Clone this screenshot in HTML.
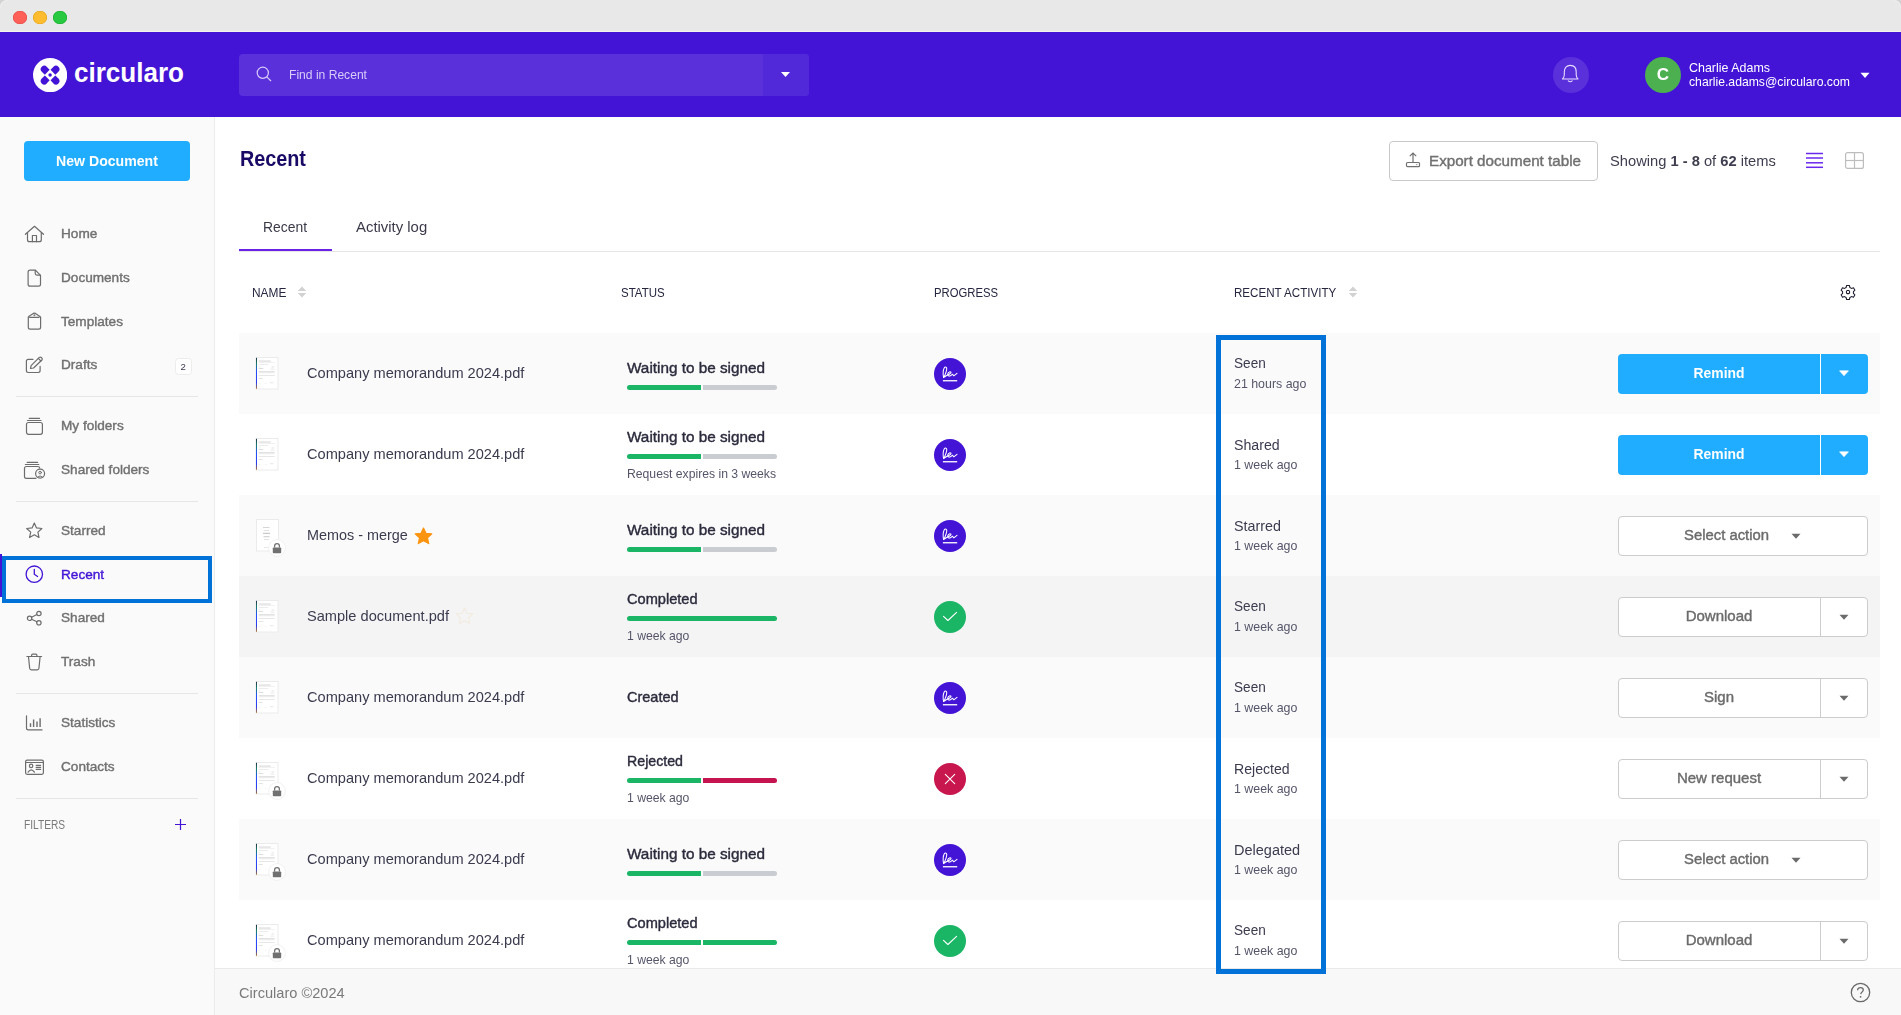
<!DOCTYPE html>
<html><head><meta charset="utf-8"><title>Circularo - Recent</title>
<style>
html,body{margin:0;padding:0;width:1901px;height:1015px;overflow:hidden;background:#fff;font-family:"Liberation Sans", sans-serif;}
.a{position:absolute;}
.t{position:absolute;white-space:nowrap;line-height:0;will-change:transform;}
.t b{font-weight:700;}
.sb{-webkit-text-stroke:0.4px currentColor;}
</style></head><body>
<div class="a" style="left:0px;top:0px;width:1901px;height:31px;background:#e8e8e8"></div>
<div class="a" style="left:0px;top:31px;width:1901px;height:1px;background:#f3f3ee"></div>
<svg class="a" style="left:0;top:0" width="12" height="12" viewBox="0 0 12 12"><path d="M0 0 H7.5 Q0 0 0 7.5 Z" fill="#d2d2d2"/><path d="M0.6 7.5 Q0.6 0.6 7.5 0.6" fill="none" stroke="#efefef" stroke-width="1"/></svg>
<svg class="a" style="left:1889px;top:0" width="12" height="12" viewBox="0 0 12 12"><path d="M12 0 H4.5 Q12 0 12 7.5 Z" fill="#d2d2d2"/><path d="M11.4 7.5 Q11.4 0.6 4.5 0.6" fill="none" stroke="#efefef" stroke-width="1"/></svg>
<div class="a" style="left:13.4px;top:10.6px;width:13.2px;height:13.2px;background:#fe5f57;border-radius:50%;box-shadow:inset 0 0 0 0.6px #e2463f"></div>
<div class="a" style="left:33.4px;top:10.6px;width:13.2px;height:13.2px;background:#febc2e;border-radius:50%;box-shadow:inset 0 0 0 0.6px #e1a116"></div>
<div class="a" style="left:53.4px;top:10.6px;width:13.2px;height:13.2px;background:#28c840;border-radius:50%;box-shadow:inset 0 0 0 0.6px #12ac28"></div>
<div class="a" style="left:0px;top:32px;width:1901px;height:85px;background:#4314d6"></div>
<svg class="a" style="left:32.8px;top:57.6px" width="34.2" height="34.2" viewBox="0 0 34.2 34.2">
<circle cx="17.1" cy="17.1" r="17.1" fill="#fff"/>
<g fill="#4314d6" transform="translate(0.1 0.1)">
<path id="lobe" d="M16.55 11.75 L13.62 8.68 A3.49 3.49 0 0 0 8.68 13.62 L11.75 16.55 Z"/>
<path d="M16.55 11.75 L13.62 8.68 A3.49 3.49 0 0 0 8.68 13.62 L11.75 16.55 Z" transform="rotate(90 17 17)"/>
<path d="M16.55 11.75 L13.62 8.68 A3.49 3.49 0 0 0 8.68 13.62 L11.75 16.55 Z" transform="rotate(180 17 17)"/>
<path d="M16.55 11.75 L13.62 8.68 A3.49 3.49 0 0 0 8.68 13.62 L11.75 16.55 Z" transform="rotate(270 17 17)"/>
<circle cx="17" cy="17" r="1.75"/>
</g></svg>
<svg class="a" style="left:73px;top:55px" width="115" height="35" viewBox="0 0 115 35"><text x="1" y="27.2" font-family="Liberation Sans" font-weight="700" font-size="28" fill="#fff" textLength="110" lengthAdjust="spacingAndGlyphs">circularo</text></svg>
<div class="a" style="left:239px;top:54px;width:570px;height:42px;background:#5a30db;border-radius:4px"></div>
<div class="a" style="left:763px;top:54px;width:46px;height:42px;background:#5229d8;border-radius:0 4px 4px 0"></div>
<svg class="a" style="left:255px;top:65px" width="20" height="20" viewBox="0 0 20 20"><circle cx="7.8" cy="7.8" r="5.6" fill="none" stroke="#d9cdf7" stroke-width="1.2"/><line x1="11.8" y1="11.8" x2="16" y2="16" stroke="#d9cdf7" stroke-width="1.2"/></svg>
<div class="t " style="left:288.50px;top:74.81px;font-size:12.1px;font-weight:400;color:#d9cdf7;transform:scaleY(1.12);transform-origin:0 4.19px;">Find in Recent</div>
<svg class="a" style="left:780px;top:71px" width="11" height="7" viewBox="0 0 11 7"><path d="M1 1 L10 1 L5.5 6 Z" fill="#fff"/></svg>
<div class="a" style="left:1552.5px;top:57px;width:36px;height:36px;background:#5a30db;border-radius:50%"></div>
<svg class="a" style="left:1561px;top:64px" width="20" height="20" viewBox="0 0 20 20"><path d="M1.5 15 Q3.3 13.4 3.3 10.8 V8 C3.3 4 5.6 1.4 9.25 1.4 C12.9 1.4 15.2 4 15.2 8 V10.8 Q15.2 13.4 17 15 Z" fill="none" stroke="#e6dcff" stroke-width="1.1" stroke-linejoin="round"/><path d="M7.3 16.9 Q9.25 18.6 11.2 16.9" fill="none" stroke="#e6dcff" stroke-width="1.1" stroke-linecap="round"/></svg>
<div class="a" style="left:1645px;top:57px;width:36px;height:36px;background:#4caf50;border-radius:50%"></div>
<div class="t" style="left:1645.00px;width:36.00px;text-align:center;top:75.11px;font-size:17px;font-weight:700;color:#fff;">C</div>
<div class="t " style="left:1688.50px;top:67.68px;font-size:12.46px;font-weight:400;color:#fff;transform:scaleY(1.07);transform-origin:0 4.32px;">Charlie Adams</div>
<div class="t " style="left:1688.50px;top:81.77px;font-size:12.21px;font-weight:400;color:#fff;transform:scaleY(1.07);transform-origin:0 4.23px;">charlie.adams@circularo.com</div>
<svg class="a" style="left:1860px;top:71.5px" width="10" height="7" viewBox="0 0 10 7"><path d="M0.5 0.8 L9.5 0.8 L5 6 Z" fill="#fff"/></svg>
<div class="a" style="left:0px;top:117px;width:214px;height:898px;background:#fafafa"></div>
<div class="a" style="left:214px;top:117px;width:1px;height:898px;background:#ececec"></div>
<div class="a" style="left:24px;top:141px;width:166px;height:40px;background:#21adff;border-radius:4px"></div>
<div class="t" style="left:24.00px;width:166.00px;text-align:center;top:161.11px;font-size:14.1px;font-weight:700;color:#fff;transform:scaleY(1.08);transform-origin:0 4.89px;">New Document</div>
<div class="t sb" style="left:61.00px;top:234.09px;font-size:13.6px;font-weight:400;color:#707070;">Home</div>
<div class="t sb" style="left:61.00px;top:277.89px;font-size:13.6px;font-weight:400;color:#707070;">Documents</div>
<div class="t sb" style="left:61.00px;top:321.79px;font-size:13.6px;font-weight:400;color:#707070;">Templates</div>
<div class="t sb" style="left:61.00px;top:365.49px;font-size:13.6px;font-weight:400;color:#707070;">Drafts</div>
<div class="t sb" style="left:61.00px;top:426.09px;font-size:13.6px;font-weight:400;color:#707070;">My folders</div>
<div class="t sb" style="left:61.00px;top:470.09px;font-size:13.6px;font-weight:400;color:#707070;">Shared folders</div>
<div class="t sb" style="left:61.00px;top:531.49px;font-size:13.6px;font-weight:400;color:#707070;">Starred</div>
<div class="t sb" style="left:61.00px;top:575.19px;font-size:13.6px;font-weight:400;color:#4314d6;">Recent</div>
<div class="t sb" style="left:61.00px;top:617.79px;font-size:13.6px;font-weight:400;color:#707070;">Shared</div>
<div class="t sb" style="left:61.00px;top:661.59px;font-size:13.6px;font-weight:400;color:#707070;">Trash</div>
<div class="t sb" style="left:61.00px;top:723.29px;font-size:13.6px;font-weight:400;color:#707070;">Statistics</div>
<div class="t sb" style="left:61.00px;top:767.09px;font-size:13.6px;font-weight:400;color:#707070;">Contacts</div>
<div class="a" style="left:16px;top:396px;width:182px;height:1px;background:#e6e6e6"></div>
<div class="a" style="left:16px;top:501px;width:182px;height:1px;background:#e6e6e6"></div>
<div class="a" style="left:16px;top:693px;width:182px;height:1px;background:#e6e6e6"></div>
<div class="a" style="left:16px;top:798px;width:182px;height:1px;background:#e6e6e6"></div>
<div class="a" style="left:175.2px;top:358.2px;width:16.4px;height:16.8px;background:#fff;border:1px solid #ececec;border-radius:3.5px;box-sizing:border-box"></div>
<div class="t" style="left:175.20px;width:16.40px;text-align:center;top:366.67px;font-size:9.6px;font-weight:400;color:#3a3a55;">2</div>
<div class="a" style="left:0px;top:554px;width:2px;height:43px;background:#4314d6"></div>
<div class="a" style="left:2px;top:555.5px;width:210px;height:47px;border:4.5px solid #0072d8;box-sizing:border-box"></div>
<div class="t " style="left:24.00px;top:825.97px;font-size:10.2px;font-weight:400;color:#7a7a7a;transform:scaleY(1.18);transform-origin:0 3.53px;">FILTERS</div>
<svg class="a" style="left:174px;top:818px" width="13" height="13" viewBox="0 0 13 13"><path d="M6.5 1 V12 M1 6.5 H12" stroke="#4314d6" stroke-width="1.2"/></svg>
<svg class="a" style="left:20px;top:220px" width="30" height="30" viewBox="0 0 30 30"><g fill="none" stroke="#6d6d6d" stroke-width="1.2" stroke-linecap="round" stroke-linejoin="round"><path d="M5.4 14.3 L14.5 6.3 L23.5 14.3"/><path d="M7.5 12.6 V19.7 Q7.5 21.7 9.5 21.7 H19.3 Q21.3 21.7 21.3 19.7 V12.6"/><path d="M12.4 21.7 V15.5 H16.5 V21.7"/></g></svg>
<svg class="a" style="left:20px;top:264px" width="30" height="30" viewBox="0 0 30 30"><g fill="none" stroke="#6d6d6d" stroke-width="1.2" stroke-linecap="round" stroke-linejoin="round"><path d="M10 6.2 H15.4 L20.5 11.3 V20.3 Q20.5 22.2 18.5 22.2 H10.1 Q8.1 22.2 8.1 20.3 V8.2 Q8.1 6.2 10 6.2 Z"/><path d="M15.2 6.4 V9.3 Q15.2 11.1 17 11.1 H20.3"/></g></svg>
<svg class="a" style="left:20px;top:307px" width="30" height="30" viewBox="0 0 30 30"><g fill="none" stroke="#6d6d6d" stroke-width="1.2" stroke-linecap="round" stroke-linejoin="round"><path d="M8.3 9.9 V20.3 Q8.3 22.2 10.2 22.2 H18.7 Q20.6 22.2 20.6 20.3 V9.9"/><path d="M9.6 10.3 H19.1"/><path d="M8.7 9.5 L13.3 6.4 Q14.4 5.8 15.5 6.4 L19.9 9.5"/><circle cx="14.4" cy="8.3" r="0.35"/></g></svg>
<svg class="a" style="left:20px;top:350px" width="30" height="30" viewBox="0 0 30 30"><g fill="none" stroke="#6d6d6d" stroke-width="1.2" stroke-linecap="round" stroke-linejoin="round"><path d="M13 9.3 H8.3 Q6.4 9.3 6.4 11.2 V20.6 Q6.4 22.5 8.3 22.5 H18.2 Q20.1 22.5 20.1 20.6 V16.4"/><path d="M10.5 18.5 L11.1 15.6 L19.3 7.4 Q20.3 6.6 21.3 7.5 L21.9 8.1 Q22.7 9.1 21.9 10 L13.6 18 Z"/><path d="M18.3 8.4 L20.9 11"/></g></svg>
<svg class="a" style="left:20px;top:411px" width="30" height="30" viewBox="0 0 30 30"><g fill="none" stroke="#6d6d6d" stroke-width="1.2" stroke-linecap="round" stroke-linejoin="round"><path d="M9.3 7.4 H19.5"/><path d="M7.5 9.5 H21"/><rect x="6.5" y="11.5" width="15.9" height="11.8" rx="2"/></g></svg>
<svg class="a" style="left:20px;top:455px" width="30" height="30" viewBox="0 0 30 30"><g fill="none" stroke="#6d6d6d" stroke-width="1.2" stroke-linecap="round" stroke-linejoin="round"><path d="M7.2 7.4 H17.6"/><path d="M5.4 9.5 H18.8"/><path d="M19.6 12.9 V12.8 Q19.6 11.5 17.8 11.5 H6.4 Q4.5 11.5 4.5 13.4 V21.4 Q4.5 23.3 6.4 23.3 H16"/><circle cx="20.1" cy="18.6" r="4.5"/><circle cx="20.1" cy="17.6" r="1.3" stroke-width="1"/><path d="M17.6 22 Q20.1 19.6 22.6 22" stroke-width="1"/></g></svg>
<svg class="a" style="left:20px;top:516px" width="30" height="30" viewBox="0 0 30 30"><g fill="none" stroke="#6d6d6d" stroke-width="1.2" stroke-linecap="round" stroke-linejoin="round"><path d="M14.3 7 L16.5 11.9 L21.9 12.5 L17.9 16.1 L19 21.5 L14.3 18.8 L9.6 21.5 L10.7 16.1 L6.7 12.5 L12.1 11.9 Z"/></g></svg>
<svg class="a" style="left:20px;top:560px" width="30" height="30" viewBox="0 0 30 30"><g fill="none" stroke="#4314d6" stroke-width="1.3" stroke-linecap="round" stroke-linejoin="round"><circle cx="14.3" cy="14.2" r="8.2"/><path d="M14.3 9.3 V14.3 L17.6 16.5"/></g></svg>
<svg class="a" style="left:20px;top:603px" width="30" height="30" viewBox="0 0 30 30"><g fill="none" stroke="#6d6d6d" stroke-width="1.2" stroke-linecap="round" stroke-linejoin="round"><circle cx="18.9" cy="10.5" r="2.2"/><circle cx="9.6" cy="15.3" r="2.2"/><circle cx="18.9" cy="19.8" r="2.2"/><path d="M11.6 14.3 L16.9 11.5 M11.6 16.3 L16.9 18.8"/></g></svg>
<svg class="a" style="left:20px;top:647px" width="30" height="30" viewBox="0 0 30 30"><g fill="none" stroke="#6d6d6d" stroke-width="1.2" stroke-linecap="round" stroke-linejoin="round"><path d="M6.9 9.5 H21.6"/><path d="M11.6 9.3 V8.3 Q11.6 7.2 12.7 7.2 H15.8 Q16.9 7.2 16.9 8.3 V9.3"/><path d="M8.5 9.8 L9.7 21.5 Q9.9 22.8 11.2 22.8 H17.4 Q18.7 22.8 18.9 21.5 L20.1 9.8"/></g></svg>
<svg class="a" style="left:20px;top:708px" width="30" height="30" viewBox="0 0 30 30"><g fill="none" stroke="#6d6d6d" stroke-width="1.2" stroke-linecap="round" stroke-linejoin="round"><path d="M6.5 7.8 V20 Q6.5 21.9 8.4 21.9 H22"/><path d="M10.5 15.3 V19.1 M13.6 11.5 V19.1 M17 13.4 V19 M20.1 10.3 V19" stroke-width="1.4" stroke-linecap="butt"/></g></svg>
<svg class="a" style="left:20px;top:752px" width="30" height="30" viewBox="0 0 30 30"><g fill="none" stroke="#6d6d6d" stroke-width="1.2" stroke-linecap="round" stroke-linejoin="round"><rect x="5.6" y="8.2" width="17.8" height="14.1" rx="1.5"/><path d="M5.6 10.5 H23.4"/><circle cx="11.1" cy="13.9" r="1.7"/><path d="M8.1 20.2 Q11.2 15.6 14.4 20.2"/><path d="M16.2 13.4 H20.6 M16.2 15.4 H20.6 M16.2 17.4 H20.6"/></g></svg>
<div class="t " style="left:239.50px;top:159.14px;font-size:19.8px;font-weight:700;color:#1a0a66;transform:scaleY(1.07);transform-origin:0 6.86px;">Recent</div>
<div class="a" style="left:1389px;top:141px;width:209px;height:40px;border:1px solid #c9c9c9;border-radius:4px;box-sizing:border-box;background:#fff"></div>
<svg class="a" style="left:1404px;top:151px" width="18" height="18" viewBox="0 0 18 18"><path d="M9 2.2 V12 M5.8 5.2 L9 2 L12.2 5.2" fill="none" stroke="#707070" stroke-width="1.2"/><rect x="2.5" y="11.5" width="13" height="4.2" rx="1" fill="none" stroke="#707070" stroke-width="1.2"/><circle cx="12.8" cy="13.6" r="0.6" fill="#707070"/></svg>
<div class="t sb" style="left:1428.50px;top:160.73px;font-size:15.2px;font-weight:400;color:#707070;">Export document table</div>
<div class="t " style="left:1609.50px;top:160.91px;font-size:14.7px;font-weight:400;color:#3d3d4f;">Showing <b>1 - 8</b> of <b>62</b> items</div>
<svg class="a" style="left:1806px;top:152px" width="17" height="17" viewBox="0 0 17 17"><g stroke="#6a28ee" stroke-width="1.5"><line x1="0" y1="1.5" x2="17" y2="1.5"/><line x1="0" y1="6" x2="17" y2="6"/><line x1="0" y1="10.8" x2="17" y2="10.8"/><line x1="0" y1="15.3" x2="17" y2="15.3"/></g></svg>
<svg class="a" style="left:1845px;top:152px" width="19" height="17" viewBox="0 0 19 17"><rect x="0.6" y="0.6" width="17.8" height="15.8" rx="2" fill="none" stroke="#bdbdbd" stroke-width="1.2"/><line x1="9.5" y1="0.6" x2="9.5" y2="16.4" stroke="#bdbdbd" stroke-width="1.2"/><line x1="0.6" y1="8.5" x2="18.4" y2="8.5" stroke="#bdbdbd" stroke-width="1.2"/></svg>
<div class="t " style="left:263.00px;top:227.18px;font-size:13.9px;font-weight:400;color:#3a3a4a;transform:scaleY(1.08);transform-origin:0 4.82px;">Recent</div>
<div class="t " style="left:356.00px;top:226.84px;font-size:14.9px;font-weight:400;color:#3a3a4a;transform:scaleY(1.03);transform-origin:0 5.16px;">Activity log</div>
<div class="a" style="left:239px;top:251px;width:1641px;height:1px;background:#e6e6e6"></div>
<div class="a" style="left:239px;top:249px;width:93px;height:2px;background:#6b21e8"></div>
<div class="t " style="left:251.50px;top:293.18px;font-size:11.9px;font-weight:400;color:#262640;transform:scaleY(1.15);transform-origin:0 4.12px;">NAME</div>
<div class="t " style="left:620.50px;top:293.32px;font-size:11.5px;font-weight:400;color:#262640;transform:scaleY(1.18);transform-origin:0 3.98px;">STATUS</div>
<div class="t " style="left:934.00px;top:293.38px;font-size:11.3px;font-weight:400;color:#262640;transform:scaleY(1.18);transform-origin:0 3.92px;">PROGRESS</div>
<div class="t " style="left:1233.80px;top:293.28px;font-size:11.6px;font-weight:400;color:#262640;transform:scaleY(1.16);transform-origin:0 4.02px;">RECENT ACTIVITY</div>
<svg class="a" style="left:297px;top:286px" width="10" height="12" viewBox="0 0 10 12"><path d="M5 0.5 L9.3 5 L0.7 5 Z M5 11.5 L9.3 7 L0.7 7 Z" fill="#d2d2d2"/></svg>
<svg class="a" style="left:1348px;top:286px" width="10" height="12" viewBox="0 0 10 12"><path d="M5 0.5 L9.3 5 L0.7 5 Z M5 11.5 L9.3 7 L0.7 7 Z" fill="#d2d2d2"/></svg>
<svg class="a" style="left:1840px;top:284px" width="16" height="16" viewBox="0 0 16 16"><path d="M6.6 1.5 h2.8 l0.5 2 l1.6 0.9 l2 -0.6 l1.4 2.4 l-1.5 1.4 v1.8 l1.5 1.4 l-1.4 2.4 l-2 -0.6 l-1.6 0.9 l-0.5 2 h-2.8 l-0.5 -2 l-1.6 -0.9 l-2 0.6 l-1.4 -2.4 l1.5 -1.4 v-1.8 l-1.5 -1.4 l1.4 -2.4 l2 0.6 l1.6 -0.9 z" fill="none" stroke="#1c1c30" stroke-width="1.05" stroke-linejoin="round"/><rect x="6.4" y="6.4" width="3.2" height="3.2" rx="1" fill="none" stroke="#1c1c30" stroke-width="1.05"/></svg>
<div class="a" style="left:239px;top:333px;width:1641px;height:81px;background:#fafafa"></div>
<svg class="a" style="left:255.0px;top:357.2px" width="24" height="33" viewBox="-0.5 0 24 33"><defs><linearGradient id="lg357" x1="0" y1="0" x2="0" y2="1"><stop offset="0" stop-color="#22304a"/><stop offset="0.2" stop-color="#15806c"/><stop offset="0.45" stop-color="#2450ff"/><stop offset="0.8" stop-color="#2a3cf0"/><stop offset="1" stop-color="#b07830"/></linearGradient></defs><rect x="0.5" y="0.5" width="22" height="31.5" fill="#fff" stroke="#ebebeb"/><rect x="0.5" y="0.8" width="1" height="31" fill="url(#lg357)"/><g fill="#cfcfcf"><rect x="3.2" y="3.6" width="12" height="0.9"/><rect x="3.2" y="5.7" width="16" height="0.3"/><rect x="3.2" y="7.6" width="9.5" height="0.4"/><rect x="3.2" y="9.7" width="1.6" height="0.5"/><rect x="16" y="9.7" width="2.6" height="0.6"/><rect x="3.2" y="11.3" width="4.5" height="0.7"/><rect x="15" y="11.8" width="3.6" height="0.5"/><rect x="3.2" y="14.2" width="16" height="0.6"/><rect x="3.2" y="15.6" width="16" height="0.5"/><rect x="3.2" y="18.3" width="16" height="0.5"/><rect x="3.2" y="21" width="4" height="0.6"/><rect x="3.2" y="26.5" width="1.5" height="0.3"/><rect x="9.5" y="26.5" width="1.5" height="0.3"/><rect x="14.5" y="25.6" width="3.5" height="0.5"/></g></svg>
<div class="t " style="left:307.30px;top:372.94px;font-size:14.6px;font-weight:400;color:#3b3b4f;">Company memorandum 2024.pdf</div>
<div class="t sb" style="left:626.80px;top:367.70px;font-size:15.3px;font-weight:400;color:#2b2b3d;">Waiting to be signed</div>
<div class="a" style="left:627px;top:385px;width:74px;height:5px;background:#1bb566;border-radius:2.5px 0 0 2.5px"></div>
<div class="a" style="left:703px;top:385px;width:74px;height:5px;background:#c9ccd0;border-radius:0 2.5px 2.5px 0"></div>
<svg class="a" style="left:934px;top:358px" width="32" height="32" viewBox="0 0 32 32"><circle cx="16" cy="16" r="16" fill="#4314d6"/><path d="M9.6 19.6 C9.0 16.5 9.2 12 10.2 10 C10.9 8.7 12.4 8.6 12.7 10.2 C13.0 12.2 11.6 15.8 10.0 19.2 C11.5 18.2 13 17.2 14.8 16.4 C16.5 15.6 17.4 14.8 16.9 14.1 C16.3 13.4 14.6 14 13.9 15.4 C13.3 16.8 14 18.2 15.4 18.1 C16.6 18 17.4 17 18.4 16.2 L19.8 17.8 L23 15.3" fill="none" stroke="#fff" stroke-width="1.05" stroke-linecap="round" stroke-linejoin="round"/><rect x="8.9" y="22.1" width="14.3" height="1.3" fill="#fff"/></svg>
<div class="t " style="left:1234.00px;top:364.29px;font-size:13.6px;font-weight:400;color:#3b3b4f;transform:scaleY(1.06);transform-origin:0 4.71px;">Seen</div>
<div class="t " style="left:1234.00px;top:383.80px;font-size:12.4px;font-weight:400;color:#55556a;transform:scaleY(1.1);transform-origin:0 4.30px;">21 hours ago</div>
<div class="a" style="left:1618px;top:354px;width:250px;height:40px;background:#21adff;border-radius:4px"></div>
<div class="a" style="left:1820px;top:354px;width:1px;height:40px;background:#ffffff"></div>
<div class="t" style="left:1618.00px;width:202.00px;text-align:center;top:373.18px;font-size:13.9px;font-weight:700;color:#fff;">Remind</div>
<svg class="a" style="left:1839px;top:370.4px" width="10" height="7" viewBox="0 0 10 7"><path d="M0.5 0.8 L9.5 0.8 L5 5.8 Z" fill="#fff" stroke="#fff" stroke-width="0.6" stroke-linejoin="round"/></svg>
<div class="a" style="left:239px;top:414px;width:1641px;height:81px;background:#ffffff"></div>
<svg class="a" style="left:255.0px;top:438.2px" width="24" height="33" viewBox="-0.5 0 24 33"><defs><linearGradient id="lg438" x1="0" y1="0" x2="0" y2="1"><stop offset="0" stop-color="#22304a"/><stop offset="0.2" stop-color="#15806c"/><stop offset="0.45" stop-color="#2450ff"/><stop offset="0.8" stop-color="#2a3cf0"/><stop offset="1" stop-color="#b07830"/></linearGradient></defs><rect x="0.5" y="0.5" width="22" height="31.5" fill="#fff" stroke="#ebebeb"/><rect x="0.5" y="0.8" width="1" height="31" fill="url(#lg438)"/><g fill="#cfcfcf"><rect x="3.2" y="3.6" width="12" height="0.9"/><rect x="3.2" y="5.7" width="16" height="0.3"/><rect x="3.2" y="7.6" width="9.5" height="0.4"/><rect x="3.2" y="9.7" width="1.6" height="0.5"/><rect x="16" y="9.7" width="2.6" height="0.6"/><rect x="3.2" y="11.3" width="4.5" height="0.7"/><rect x="15" y="11.8" width="3.6" height="0.5"/><rect x="3.2" y="14.2" width="16" height="0.6"/><rect x="3.2" y="15.6" width="16" height="0.5"/><rect x="3.2" y="18.3" width="16" height="0.5"/><rect x="3.2" y="21" width="4" height="0.6"/><rect x="3.2" y="26.5" width="1.5" height="0.3"/><rect x="9.5" y="26.5" width="1.5" height="0.3"/><rect x="14.5" y="25.6" width="3.5" height="0.5"/></g></svg>
<div class="t " style="left:307.30px;top:453.94px;font-size:14.6px;font-weight:400;color:#3b3b4f;">Company memorandum 2024.pdf</div>
<div class="t sb" style="left:626.80px;top:436.70px;font-size:15.3px;font-weight:400;color:#2b2b3d;">Waiting to be signed</div>
<div class="a" style="left:627px;top:454px;width:74px;height:5px;background:#1bb566;border-radius:2.5px 0 0 2.5px"></div>
<div class="a" style="left:703px;top:454px;width:74px;height:5px;background:#c9ccd0;border-radius:0 2.5px 2.5px 0"></div>
<div class="t " style="left:626.80px;top:473.77px;font-size:12.2px;font-weight:400;color:#55556a;transform:scaleY(1.08);transform-origin:0 4.23px;">Request expires in 3 weeks</div>
<svg class="a" style="left:934px;top:439px" width="32" height="32" viewBox="0 0 32 32"><circle cx="16" cy="16" r="16" fill="#4314d6"/><path d="M9.6 19.6 C9.0 16.5 9.2 12 10.2 10 C10.9 8.7 12.4 8.6 12.7 10.2 C13.0 12.2 11.6 15.8 10.0 19.2 C11.5 18.2 13 17.2 14.8 16.4 C16.5 15.6 17.4 14.8 16.9 14.1 C16.3 13.4 14.6 14 13.9 15.4 C13.3 16.8 14 18.2 15.4 18.1 C16.6 18 17.4 17 18.4 16.2 L19.8 17.8 L23 15.3" fill="none" stroke="#fff" stroke-width="1.05" stroke-linecap="round" stroke-linejoin="round"/><rect x="8.9" y="22.1" width="14.3" height="1.3" fill="#fff"/></svg>
<div class="t " style="left:1234.00px;top:445.08px;font-size:14.2px;font-weight:400;color:#3b3b4f;transform:scaleY(1.06);transform-origin:0 4.92px;">Shared</div>
<div class="t " style="left:1234.00px;top:464.80px;font-size:12.4px;font-weight:400;color:#55556a;transform:scaleY(1.1);transform-origin:0 4.30px;">1 week ago</div>
<div class="a" style="left:1618px;top:435px;width:250px;height:40px;background:#21adff;border-radius:4px"></div>
<div class="a" style="left:1820px;top:435px;width:1px;height:40px;background:#ffffff"></div>
<div class="t" style="left:1618.00px;width:202.00px;text-align:center;top:454.18px;font-size:13.9px;font-weight:700;color:#fff;">Remind</div>
<svg class="a" style="left:1839px;top:451.4px" width="10" height="7" viewBox="0 0 10 7"><path d="M0.5 0.8 L9.5 0.8 L5 5.8 Z" fill="#fff" stroke="#fff" stroke-width="0.6" stroke-linejoin="round"/></svg>
<div class="a" style="left:239px;top:495px;width:1641px;height:81px;background:#fafafa"></div>
<svg class="a" style="left:255.5px;top:519.2px" width="23" height="33" viewBox="0 0 23 33"><rect x="0.5" y="0.5" width="22" height="31.5" fill="#fff" stroke="#ebebeb"/><g fill="#c4c4c4"><rect x="7" y="8" width="6.5" height="0.7"/><rect x="8" y="11" width="5" height="0.5"/><rect x="7" y="13.8" width="7" height="1.1"/><rect x="7.5" y="17.3" width="6" height="0.9"/><rect x="8" y="20.5" width="5" height="0.5"/><rect x="8" y="28.5" width="4" height="0.4"/></g></svg>
<svg class="a" style="left:268px;top:539px" width="18" height="18" viewBox="0 0 18 18"><circle cx="9" cy="9" r="8.4" fill="#fff" stroke="#eeeeee" stroke-width="0.8"/><rect x="4.8" y="8.4" width="8.4" height="5.8" rx="0.9" fill="#717171"/><path d="M6.6 8.6 V7.1 a2.4 2.4 0 0 1 4.8 0 V8.6" fill="none" stroke="#717171" stroke-width="1.25"/></svg>
<div class="t " style="left:307.30px;top:535.01px;font-size:14.4px;font-weight:400;color:#3b3b4f;">Memos - merge</div>
<svg class="a" style="left:413.6px;top:527px" width="19" height="18" viewBox="0 0 19 18"><path d="M9.5 1 L12 6.3 L17.8 6.9 L13.5 10.8 L14.7 16.6 L9.5 13.7 L4.3 16.6 L5.5 10.8 L1.2 6.9 L7 6.3 Z" fill="#fb9410" stroke="#fb9410" stroke-width="1.2" stroke-linejoin="round"/></svg>
<div class="t sb" style="left:626.80px;top:529.70px;font-size:15.3px;font-weight:400;color:#2b2b3d;">Waiting to be signed</div>
<div class="a" style="left:627px;top:547px;width:74px;height:5px;background:#1bb566;border-radius:2.5px 0 0 2.5px"></div>
<div class="a" style="left:703px;top:547px;width:74px;height:5px;background:#c9ccd0;border-radius:0 2.5px 2.5px 0"></div>
<svg class="a" style="left:934px;top:520px" width="32" height="32" viewBox="0 0 32 32"><circle cx="16" cy="16" r="16" fill="#4314d6"/><path d="M9.6 19.6 C9.0 16.5 9.2 12 10.2 10 C10.9 8.7 12.4 8.6 12.7 10.2 C13.0 12.2 11.6 15.8 10.0 19.2 C11.5 18.2 13 17.2 14.8 16.4 C16.5 15.6 17.4 14.8 16.9 14.1 C16.3 13.4 14.6 14 13.9 15.4 C13.3 16.8 14 18.2 15.4 18.1 C16.6 18 17.4 17 18.4 16.2 L19.8 17.8 L23 15.3" fill="none" stroke="#fff" stroke-width="1.05" stroke-linecap="round" stroke-linejoin="round"/><rect x="8.9" y="22.1" width="14.3" height="1.3" fill="#fff"/></svg>
<div class="t " style="left:1234.00px;top:526.05px;font-size:14.3px;font-weight:400;color:#3b3b4f;transform:scaleY(1.06);transform-origin:0 4.95px;">Starred</div>
<div class="t " style="left:1234.00px;top:545.80px;font-size:12.4px;font-weight:400;color:#55556a;transform:scaleY(1.1);transform-origin:0 4.30px;">1 week ago</div>
<div class="a" style="left:1618px;top:516px;width:250px;height:40px;background:#fff;border:1px solid #cccccc;border-radius:4px;box-sizing:border-box"></div>
<div class="t sb" style="left:1683.80px;top:534.85px;font-size:14.85px;font-weight:400;color:#6b6b6b;">Select action</div>
<svg class="a" style="left:1791px;top:533.2px" width="10" height="7" viewBox="0 0 10 7"><path d="M0.5 0.8 L9.5 0.8 L5 5.8 Z" fill="#6b6b6b"/></svg>
<div class="a" style="left:239px;top:576px;width:1641px;height:81px;background:#f4f4f4"></div>
<svg class="a" style="left:255.0px;top:600.2px" width="24" height="33" viewBox="-0.5 0 24 33"><defs><linearGradient id="lg600" x1="0" y1="0" x2="0" y2="1"><stop offset="0" stop-color="#22304a"/><stop offset="0.2" stop-color="#15806c"/><stop offset="0.45" stop-color="#2450ff"/><stop offset="0.8" stop-color="#2a3cf0"/><stop offset="1" stop-color="#b07830"/></linearGradient></defs><rect x="0.5" y="0.5" width="22" height="31.5" fill="#fff" stroke="#ebebeb"/><rect x="0.5" y="0.8" width="1" height="31" fill="url(#lg600)"/><g fill="#cfcfcf"><rect x="3.2" y="3.6" width="12" height="0.9"/><rect x="3.2" y="5.7" width="16" height="0.3"/><rect x="3.2" y="7.6" width="9.5" height="0.4"/><rect x="3.2" y="9.7" width="1.6" height="0.5"/><rect x="16" y="9.7" width="2.6" height="0.6"/><rect x="3.2" y="11.3" width="4.5" height="0.7"/><rect x="15" y="11.8" width="3.6" height="0.5"/><rect x="3.2" y="14.2" width="16" height="0.6"/><rect x="3.2" y="15.6" width="16" height="0.5"/><rect x="3.2" y="18.3" width="16" height="0.5"/><rect x="3.2" y="21" width="4" height="0.6"/><rect x="3.2" y="26.5" width="1.5" height="0.3"/><rect x="9.5" y="26.5" width="1.5" height="0.3"/><rect x="14.5" y="25.6" width="3.5" height="0.5"/></g></svg>
<div class="t " style="left:307.30px;top:615.94px;font-size:14.6px;font-weight:400;color:#3b3b4f;">Sample document.pdf</div>
<svg class="a" style="left:454.5px;top:607.2px" width="19" height="18" viewBox="0 0 19 18"><path d="M9.5 1 L12 6.3 L17.8 6.9 L13.5 10.8 L14.7 16.6 L9.5 13.7 L4.3 16.6 L5.5 10.8 L1.2 6.9 L7 6.3 Z" fill="none" stroke="#f3ebe0" stroke-width="1.1" stroke-linejoin="round"/></svg>
<div class="t sb" style="left:626.80px;top:598.94px;font-size:14.6px;font-weight:400;color:#2b2b3d;">Completed</div>
<div class="a" style="left:627px;top:616px;width:150px;height:5px;background:#1bb566;border-radius:2.5px"></div>
<div class="t " style="left:626.80px;top:635.77px;font-size:12.2px;font-weight:400;color:#55556a;transform:scaleY(1.08);transform-origin:0 4.23px;">1 week ago</div>
<svg class="a" style="left:934px;top:601px" width="32" height="32" viewBox="0 0 32 32"><circle cx="16" cy="16" r="16" fill="#1bb566"/><path d="M9.5 15.4 L13.9 19.5 L22.6 11.3" fill="none" stroke="#fff" stroke-width="1.1" stroke-linecap="round" stroke-linejoin="round"/></svg>
<div class="t " style="left:1234.00px;top:607.29px;font-size:13.6px;font-weight:400;color:#3b3b4f;transform:scaleY(1.06);transform-origin:0 4.71px;">Seen</div>
<div class="t " style="left:1234.00px;top:626.80px;font-size:12.4px;font-weight:400;color:#55556a;transform:scaleY(1.1);transform-origin:0 4.30px;">1 week ago</div>
<div class="a" style="left:1618px;top:597px;width:250px;height:40px;background:#fff;border:1px solid #cccccc;border-radius:4px;box-sizing:border-box"></div>
<div class="a" style="left:1820px;top:597px;width:1px;height:40px;background:#cccccc"></div>
<div class="t" style="left:1618.00px;width:202.00px;text-align:center;top:615.80px;font-size:15.0px;font-weight:400;color:#6b6b6b;-webkit-text-stroke:0.4px currentColor">Download</div>
<svg class="a" style="left:1839px;top:614px" width="10" height="7" viewBox="0 0 10 7"><path d="M0.5 0.8 L9.5 0.8 L5 5.8 Z" fill="#6b6b6b"/></svg>
<div class="a" style="left:239px;top:657px;width:1641px;height:81px;background:#fafafa"></div>
<svg class="a" style="left:255.0px;top:681.2px" width="24" height="33" viewBox="-0.5 0 24 33"><defs><linearGradient id="lg681" x1="0" y1="0" x2="0" y2="1"><stop offset="0" stop-color="#22304a"/><stop offset="0.2" stop-color="#15806c"/><stop offset="0.45" stop-color="#2450ff"/><stop offset="0.8" stop-color="#2a3cf0"/><stop offset="1" stop-color="#b07830"/></linearGradient></defs><rect x="0.5" y="0.5" width="22" height="31.5" fill="#fff" stroke="#ebebeb"/><rect x="0.5" y="0.8" width="1" height="31" fill="url(#lg681)"/><g fill="#cfcfcf"><rect x="3.2" y="3.6" width="12" height="0.9"/><rect x="3.2" y="5.7" width="16" height="0.3"/><rect x="3.2" y="7.6" width="9.5" height="0.4"/><rect x="3.2" y="9.7" width="1.6" height="0.5"/><rect x="16" y="9.7" width="2.6" height="0.6"/><rect x="3.2" y="11.3" width="4.5" height="0.7"/><rect x="15" y="11.8" width="3.6" height="0.5"/><rect x="3.2" y="14.2" width="16" height="0.6"/><rect x="3.2" y="15.6" width="16" height="0.5"/><rect x="3.2" y="18.3" width="16" height="0.5"/><rect x="3.2" y="21" width="4" height="0.6"/><rect x="3.2" y="26.5" width="1.5" height="0.3"/><rect x="9.5" y="26.5" width="1.5" height="0.3"/><rect x="14.5" y="25.6" width="3.5" height="0.5"/></g></svg>
<div class="t " style="left:307.30px;top:696.94px;font-size:14.6px;font-weight:400;color:#3b3b4f;">Company memorandum 2024.pdf</div>
<div class="t sb" style="left:626.80px;top:696.98px;font-size:14.5px;font-weight:400;color:#2b2b3d;">Created</div>
<svg class="a" style="left:934px;top:682px" width="32" height="32" viewBox="0 0 32 32"><circle cx="16" cy="16" r="16" fill="#4314d6"/><path d="M9.6 19.6 C9.0 16.5 9.2 12 10.2 10 C10.9 8.7 12.4 8.6 12.7 10.2 C13.0 12.2 11.6 15.8 10.0 19.2 C11.5 18.2 13 17.2 14.8 16.4 C16.5 15.6 17.4 14.8 16.9 14.1 C16.3 13.4 14.6 14 13.9 15.4 C13.3 16.8 14 18.2 15.4 18.1 C16.6 18 17.4 17 18.4 16.2 L19.8 17.8 L23 15.3" fill="none" stroke="#fff" stroke-width="1.05" stroke-linecap="round" stroke-linejoin="round"/><rect x="8.9" y="22.1" width="14.3" height="1.3" fill="#fff"/></svg>
<div class="t " style="left:1234.00px;top:688.29px;font-size:13.6px;font-weight:400;color:#3b3b4f;transform:scaleY(1.06);transform-origin:0 4.71px;">Seen</div>
<div class="t " style="left:1234.00px;top:707.80px;font-size:12.4px;font-weight:400;color:#55556a;transform:scaleY(1.1);transform-origin:0 4.30px;">1 week ago</div>
<div class="a" style="left:1618px;top:678px;width:250px;height:40px;background:#fff;border:1px solid #cccccc;border-radius:4px;box-sizing:border-box"></div>
<div class="a" style="left:1820px;top:678px;width:1px;height:40px;background:#cccccc"></div>
<div class="t" style="left:1618.00px;width:202.00px;text-align:center;top:696.80px;font-size:15.0px;font-weight:400;color:#6b6b6b;-webkit-text-stroke:0.4px currentColor">Sign</div>
<svg class="a" style="left:1839px;top:695px" width="10" height="7" viewBox="0 0 10 7"><path d="M0.5 0.8 L9.5 0.8 L5 5.8 Z" fill="#6b6b6b"/></svg>
<div class="a" style="left:239px;top:738px;width:1641px;height:81px;background:#ffffff"></div>
<svg class="a" style="left:255.0px;top:762.2px" width="24" height="33" viewBox="-0.5 0 24 33"><defs><linearGradient id="lg762" x1="0" y1="0" x2="0" y2="1"><stop offset="0" stop-color="#22304a"/><stop offset="0.2" stop-color="#15806c"/><stop offset="0.45" stop-color="#2450ff"/><stop offset="0.8" stop-color="#2a3cf0"/><stop offset="1" stop-color="#b07830"/></linearGradient></defs><rect x="0.5" y="0.5" width="22" height="31.5" fill="#fff" stroke="#ebebeb"/><rect x="0.5" y="0.8" width="1" height="31" fill="url(#lg762)"/><g fill="#cfcfcf"><rect x="3.2" y="3.6" width="12" height="0.9"/><rect x="3.2" y="5.7" width="16" height="0.3"/><rect x="3.2" y="7.6" width="9.5" height="0.4"/><rect x="3.2" y="9.7" width="1.6" height="0.5"/><rect x="16" y="9.7" width="2.6" height="0.6"/><rect x="3.2" y="11.3" width="4.5" height="0.7"/><rect x="15" y="11.8" width="3.6" height="0.5"/><rect x="3.2" y="14.2" width="16" height="0.6"/><rect x="3.2" y="15.6" width="16" height="0.5"/><rect x="3.2" y="18.3" width="16" height="0.5"/><rect x="3.2" y="21" width="4" height="0.6"/><rect x="3.2" y="26.5" width="1.5" height="0.3"/><rect x="9.5" y="26.5" width="1.5" height="0.3"/><rect x="14.5" y="25.6" width="3.5" height="0.5"/></g></svg>
<svg class="a" style="left:268px;top:782px" width="18" height="18" viewBox="0 0 18 18"><circle cx="9" cy="9" r="8.4" fill="#fff" stroke="#eeeeee" stroke-width="0.8"/><rect x="4.8" y="8.4" width="8.4" height="5.8" rx="0.9" fill="#717171"/><path d="M6.6 8.6 V7.1 a2.4 2.4 0 0 1 4.8 0 V8.6" fill="none" stroke="#717171" stroke-width="1.25"/></svg>
<div class="t " style="left:307.30px;top:777.94px;font-size:14.6px;font-weight:400;color:#3b3b4f;">Company memorandum 2024.pdf</div>
<div class="t sb" style="left:626.80px;top:761.08px;font-size:14.2px;font-weight:400;color:#2b2b3d;">Rejected</div>
<div class="a" style="left:627px;top:778px;width:74px;height:5px;background:#1bb566;border-radius:2.5px 0 0 2.5px"></div>
<div class="a" style="left:703px;top:778px;width:74px;height:5px;background:#c5144f;border-radius:0 2.5px 2.5px 0"></div>
<div class="t " style="left:626.80px;top:797.77px;font-size:12.2px;font-weight:400;color:#55556a;transform:scaleY(1.08);transform-origin:0 4.23px;">1 week ago</div>
<svg class="a" style="left:934px;top:763px" width="32" height="32" viewBox="0 0 32 32"><circle cx="16" cy="16" r="16" fill="#c8174f"/><path d="M11.3 11.3 L20.7 20.7 M20.7 11.3 L11.3 20.7" fill="none" stroke="#fff" stroke-width="1.05" stroke-linecap="round"/></svg>
<div class="t " style="left:1234.00px;top:769.11px;font-size:14.1px;font-weight:400;color:#3b3b4f;transform:scaleY(1.06);transform-origin:0 4.89px;">Rejected</div>
<div class="t " style="left:1234.00px;top:788.80px;font-size:12.4px;font-weight:400;color:#55556a;transform:scaleY(1.1);transform-origin:0 4.30px;">1 week ago</div>
<div class="a" style="left:1618px;top:759px;width:250px;height:40px;background:#fff;border:1px solid #cccccc;border-radius:4px;box-sizing:border-box"></div>
<div class="a" style="left:1820px;top:759px;width:1px;height:40px;background:#cccccc"></div>
<div class="t" style="left:1618.00px;width:202.00px;text-align:center;top:777.80px;font-size:15.0px;font-weight:400;color:#6b6b6b;-webkit-text-stroke:0.4px currentColor">New request</div>
<svg class="a" style="left:1839px;top:776px" width="10" height="7" viewBox="0 0 10 7"><path d="M0.5 0.8 L9.5 0.8 L5 5.8 Z" fill="#6b6b6b"/></svg>
<div class="a" style="left:239px;top:819px;width:1641px;height:81px;background:#fafafa"></div>
<svg class="a" style="left:255.0px;top:843.2px" width="24" height="33" viewBox="-0.5 0 24 33"><defs><linearGradient id="lg843" x1="0" y1="0" x2="0" y2="1"><stop offset="0" stop-color="#22304a"/><stop offset="0.2" stop-color="#15806c"/><stop offset="0.45" stop-color="#2450ff"/><stop offset="0.8" stop-color="#2a3cf0"/><stop offset="1" stop-color="#b07830"/></linearGradient></defs><rect x="0.5" y="0.5" width="22" height="31.5" fill="#fff" stroke="#ebebeb"/><rect x="0.5" y="0.8" width="1" height="31" fill="url(#lg843)"/><g fill="#cfcfcf"><rect x="3.2" y="3.6" width="12" height="0.9"/><rect x="3.2" y="5.7" width="16" height="0.3"/><rect x="3.2" y="7.6" width="9.5" height="0.4"/><rect x="3.2" y="9.7" width="1.6" height="0.5"/><rect x="16" y="9.7" width="2.6" height="0.6"/><rect x="3.2" y="11.3" width="4.5" height="0.7"/><rect x="15" y="11.8" width="3.6" height="0.5"/><rect x="3.2" y="14.2" width="16" height="0.6"/><rect x="3.2" y="15.6" width="16" height="0.5"/><rect x="3.2" y="18.3" width="16" height="0.5"/><rect x="3.2" y="21" width="4" height="0.6"/><rect x="3.2" y="26.5" width="1.5" height="0.3"/><rect x="9.5" y="26.5" width="1.5" height="0.3"/><rect x="14.5" y="25.6" width="3.5" height="0.5"/></g></svg>
<svg class="a" style="left:268px;top:863px" width="18" height="18" viewBox="0 0 18 18"><circle cx="9" cy="9" r="8.4" fill="#fff" stroke="#eeeeee" stroke-width="0.8"/><rect x="4.8" y="8.4" width="8.4" height="5.8" rx="0.9" fill="#717171"/><path d="M6.6 8.6 V7.1 a2.4 2.4 0 0 1 4.8 0 V8.6" fill="none" stroke="#717171" stroke-width="1.25"/></svg>
<div class="t " style="left:307.30px;top:858.94px;font-size:14.6px;font-weight:400;color:#3b3b4f;">Company memorandum 2024.pdf</div>
<div class="t sb" style="left:626.80px;top:853.70px;font-size:15.3px;font-weight:400;color:#2b2b3d;">Waiting to be signed</div>
<div class="a" style="left:627px;top:871px;width:74px;height:5px;background:#1bb566;border-radius:2.5px 0 0 2.5px"></div>
<div class="a" style="left:703px;top:871px;width:74px;height:5px;background:#c9ccd0;border-radius:0 2.5px 2.5px 0"></div>
<svg class="a" style="left:934px;top:844px" width="32" height="32" viewBox="0 0 32 32"><circle cx="16" cy="16" r="16" fill="#4314d6"/><path d="M9.6 19.6 C9.0 16.5 9.2 12 10.2 10 C10.9 8.7 12.4 8.6 12.7 10.2 C13.0 12.2 11.6 15.8 10.0 19.2 C11.5 18.2 13 17.2 14.8 16.4 C16.5 15.6 17.4 14.8 16.9 14.1 C16.3 13.4 14.6 14 13.9 15.4 C13.3 16.8 14 18.2 15.4 18.1 C16.6 18 17.4 17 18.4 16.2 L19.8 17.8 L23 15.3" fill="none" stroke="#fff" stroke-width="1.05" stroke-linecap="round" stroke-linejoin="round"/><rect x="8.9" y="22.1" width="14.3" height="1.3" fill="#fff"/></svg>
<div class="t " style="left:1234.00px;top:849.98px;font-size:14.5px;font-weight:400;color:#3b3b4f;transform:scaleY(1.06);transform-origin:0 5.02px;">Delegated</div>
<div class="t " style="left:1234.00px;top:869.80px;font-size:12.4px;font-weight:400;color:#55556a;transform:scaleY(1.1);transform-origin:0 4.30px;">1 week ago</div>
<div class="a" style="left:1618px;top:840px;width:250px;height:40px;background:#fff;border:1px solid #cccccc;border-radius:4px;box-sizing:border-box"></div>
<div class="t sb" style="left:1683.80px;top:858.85px;font-size:14.85px;font-weight:400;color:#6b6b6b;">Select action</div>
<svg class="a" style="left:1791px;top:857.2px" width="10" height="7" viewBox="0 0 10 7"><path d="M0.5 0.8 L9.5 0.8 L5 5.8 Z" fill="#6b6b6b"/></svg>
<div class="a" style="left:239px;top:900px;width:1641px;height:81px;background:#ffffff"></div>
<svg class="a" style="left:255.0px;top:924.2px" width="24" height="33" viewBox="-0.5 0 24 33"><defs><linearGradient id="lg924" x1="0" y1="0" x2="0" y2="1"><stop offset="0" stop-color="#22304a"/><stop offset="0.2" stop-color="#15806c"/><stop offset="0.45" stop-color="#2450ff"/><stop offset="0.8" stop-color="#2a3cf0"/><stop offset="1" stop-color="#b07830"/></linearGradient></defs><rect x="0.5" y="0.5" width="22" height="31.5" fill="#fff" stroke="#ebebeb"/><rect x="0.5" y="0.8" width="1" height="31" fill="url(#lg924)"/><g fill="#cfcfcf"><rect x="3.2" y="3.6" width="12" height="0.9"/><rect x="3.2" y="5.7" width="16" height="0.3"/><rect x="3.2" y="7.6" width="9.5" height="0.4"/><rect x="3.2" y="9.7" width="1.6" height="0.5"/><rect x="16" y="9.7" width="2.6" height="0.6"/><rect x="3.2" y="11.3" width="4.5" height="0.7"/><rect x="15" y="11.8" width="3.6" height="0.5"/><rect x="3.2" y="14.2" width="16" height="0.6"/><rect x="3.2" y="15.6" width="16" height="0.5"/><rect x="3.2" y="18.3" width="16" height="0.5"/><rect x="3.2" y="21" width="4" height="0.6"/><rect x="3.2" y="26.5" width="1.5" height="0.3"/><rect x="9.5" y="26.5" width="1.5" height="0.3"/><rect x="14.5" y="25.6" width="3.5" height="0.5"/></g></svg>
<svg class="a" style="left:268px;top:944px" width="18" height="18" viewBox="0 0 18 18"><circle cx="9" cy="9" r="8.4" fill="#fff" stroke="#eeeeee" stroke-width="0.8"/><rect x="4.8" y="8.4" width="8.4" height="5.8" rx="0.9" fill="#717171"/><path d="M6.6 8.6 V7.1 a2.4 2.4 0 0 1 4.8 0 V8.6" fill="none" stroke="#717171" stroke-width="1.25"/></svg>
<div class="t " style="left:307.30px;top:939.94px;font-size:14.6px;font-weight:400;color:#3b3b4f;">Company memorandum 2024.pdf</div>
<div class="t sb" style="left:626.80px;top:922.94px;font-size:14.6px;font-weight:400;color:#2b2b3d;">Completed</div>
<div class="a" style="left:627px;top:940px;width:74px;height:5px;background:#1bb566;border-radius:2.5px 0 0 2.5px"></div>
<div class="a" style="left:703px;top:940px;width:74px;height:5px;background:#1bb566;border-radius:0 2.5px 2.5px 0"></div>
<div class="t " style="left:626.80px;top:959.77px;font-size:12.2px;font-weight:400;color:#55556a;transform:scaleY(1.08);transform-origin:0 4.23px;">1 week ago</div>
<svg class="a" style="left:934px;top:925px" width="32" height="32" viewBox="0 0 32 32"><circle cx="16" cy="16" r="16" fill="#1bb566"/><path d="M9.5 15.4 L13.9 19.5 L22.6 11.3" fill="none" stroke="#fff" stroke-width="1.1" stroke-linecap="round" stroke-linejoin="round"/></svg>
<div class="t " style="left:1234.00px;top:931.29px;font-size:13.6px;font-weight:400;color:#3b3b4f;transform:scaleY(1.06);transform-origin:0 4.71px;">Seen</div>
<div class="t " style="left:1234.00px;top:950.80px;font-size:12.4px;font-weight:400;color:#55556a;transform:scaleY(1.1);transform-origin:0 4.30px;">1 week ago</div>
<div class="a" style="left:1618px;top:921px;width:250px;height:40px;background:#fff;border:1px solid #cccccc;border-radius:4px;box-sizing:border-box"></div>
<div class="a" style="left:1820px;top:921px;width:1px;height:40px;background:#cccccc"></div>
<div class="t" style="left:1618.00px;width:202.00px;text-align:center;top:939.80px;font-size:15.0px;font-weight:400;color:#6b6b6b;-webkit-text-stroke:0.4px currentColor">Download</div>
<svg class="a" style="left:1839px;top:938px" width="10" height="7" viewBox="0 0 10 7"><path d="M0.5 0.8 L9.5 0.8 L5 5.8 Z" fill="#6b6b6b"/></svg>
<div class="a" style="left:215px;top:968px;width:1686px;height:47px;background:#f8f8f8;border-top:1px solid #e8e8e8;box-sizing:border-box"></div>
<div class="t " style="left:239.40px;top:992.64px;font-size:14.6px;font-weight:400;color:#7a7a7a;">Circularo ©2024</div>
<svg class="a" style="left:1850px;top:982px" width="21" height="21" viewBox="0 0 21 21"><circle cx="10.5" cy="10.5" r="9.2" fill="none" stroke="#6a6a6a" stroke-width="1.3"/><path d="M7.6 8.3 C7.6 6.6 8.9 5.6 10.5 5.6 C12.1 5.6 13.3 6.6 13.3 8 C13.3 9.6 11.2 10 10.7 12.2" fill="none" stroke="#6a6a6a" stroke-width="1.3"/><circle cx="10.6" cy="14.8" r="0.9" fill="#6a6a6a"/></svg>
<div class="a" style="left:1216px;top:335px;width:110px;height:639px;border:5px solid #0072d8;box-sizing:border-box"></div>
</body></html>
